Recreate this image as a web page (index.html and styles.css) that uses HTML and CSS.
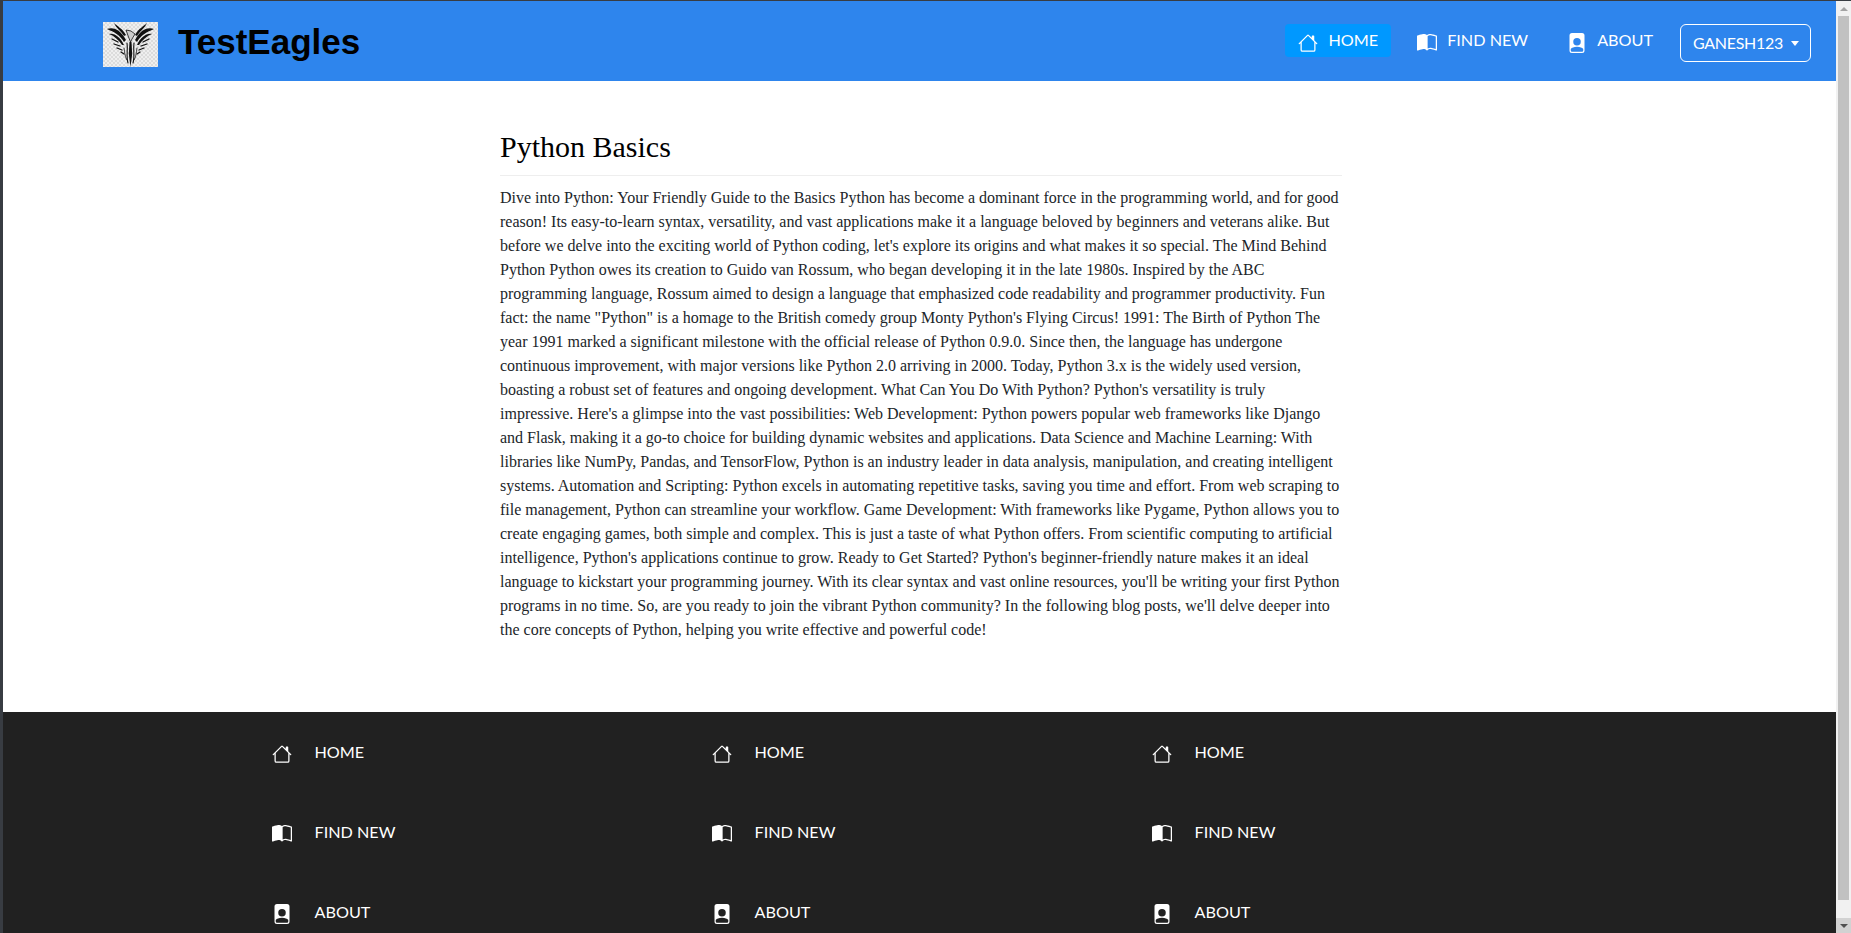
FILE: index.html
```html
<!DOCTYPE html>
<html lang="en">
<head>
<meta charset="utf-8">
<title>Python Basics</title>
<link rel="stylesheet" href="styles.css">
</head>
<body>
<svg class="sprites" width="0" height="0" aria-hidden="true">
  <symbol id="i-home" viewBox="0 0 16 16">
    <path fill="currentColor" d="M8.707 1.5a1 1 0 0 0-1.414 0L.646 8.146a.5.5 0 0 0 .708.708L2 8.207V13.5A1.5 1.5 0 0 0 3.5 15h9a1.5 1.5 0 0 0 1.5-1.5V8.207l.646.647a.5.5 0 0 0 .708-.708L13 5.793V2.5a.5.5 0 0 0-.5-.5h-1a.5.5 0 0 0-.5.5v1.293L8.707 1.5ZM13 7.207V13.5a.5.5 0 0 1-.5.5h-9a.5.5 0 0 1-.5-.5V7.207l5-5 5 5Z"/>
  </symbol>
  <symbol id="i-book" viewBox="0 0 16 16">
    <path fill="currentColor" d="M8.5 2.687c.654-.689 1.782-.886 3.112-.752 1.234.124 2.503.523 3.388.893v9.923c-.918-.35-2.107-.692-3.287-.81-1.094-.111-2.278-.039-3.213.492V2.687ZM8 1.783C7.015.936 5.587.81 4.287.94c-1.514.153-3.042.672-3.994 1.105A.5.5 0 0 0 0 2.5v11a.5.5 0 0 0 .707.455c.882-.4 2.303-.881 3.68-1.02 1.409-.142 2.59.087 3.223.877a.5.5 0 0 0 .78 0c.633-.79 1.814-1.019 3.222-.877 1.378.139 2.8.62 3.681 1.02A.5.5 0 0 0 16 13.5v-11a.5.5 0 0 0-.293-.455c-.952-.433-2.48-.952-3.994-1.105C10.413.809 8.985.936 8 1.783Z"/>
  </symbol>
  <symbol id="i-person" viewBox="0 0 16 16">
    <path fill="currentColor" d="M12 0H4a2 2 0 0 0-2 2v12a2 2 0 0 0 2 2h8a2 2 0 0 0 2-2V2a2 2 0 0 0-2-2zm-1 7a3 3 0 1 1-6 0 3 3 0 0 1 6 0zm-3 4c2.623 0 4.146.826 5 1.755V14a1 1 0 0 1-1 1H4a1 1 0 0 1-1-1v-1.245C3.854 11.825 5.377 11 8 11z"/>
  </symbol>
  <g id="wing">
    <path fill="#111" d="M4 7C10 5 17 7 23 18L21 20C17 13 11 10 4 7Z"/>
    <path fill="#111" d="M11 1C14 4 20 7 23 13L21 14C18 9 13 6 11 1Z"/>
    <path fill="#111" d="M6 12C12 11 17 15 21 23L19 23C16 18 11 14 6 12Z"/>
    <path fill="none" stroke="#111" stroke-width="1.3" stroke-linecap="round" d="M9 17L15 20M11 22L17 24M14 26L19 28M18 30L21 32"/>
    <path fill="none" stroke="#111" stroke-width="1.1" stroke-linecap="round" d="M24 21C25 28 23 35 25 41"/>
    <path fill="none" stroke="#111" stroke-width=".8" stroke-linecap="round" d="M21 26C22 32 22 35 24 38"/>
  </g>
</svg>
<div class="frame">
  <div class="page">
    <header class="navbar">
      <a class="brand" href="#">
        <span class="logo">
          <svg viewBox="0 0 55 45" width="55" height="45" aria-hidden="true">
            <use href="#wing"/>
            <use href="#wing" transform="translate(55 0) scale(-1 1)"/>
            <path fill="#111" d="M26.5 20h2l.7 12-1.7 13-1.7-13z"/>
            <path fill="#ccc" stroke="#111" stroke-width=".8" d="M23 8l5 1 4 3-3 5-1.5 3-2-5z"/>
          </svg>
        </span>
        <span class="brand-name">TestEagles</span>
      </a>
      <nav class="nav">
        <a class="nav-link active" href="#"><svg class="icon"><use href="#i-home"/></svg>HOME</a>
        <a class="nav-link" href="#"><svg class="icon"><use href="#i-book"/></svg>FIND NEW</a>
        <a class="nav-link" href="#"><svg class="icon"><use href="#i-person"/></svg>ABOUT</a>
        <button class="user-btn" type="button">GANESH123<span class="caret"></span></button>
      </nav>
    </header>
    <main class="article">
      <h2 class="title">Python Basics</h2>
      <p class="body-text">Dive into Python: Your Friendly Guide to the Basics Python has become a dominant force in the programming world, and for good reason! Its easy-to-learn syntax, versatility, and vast applications make it a language beloved by beginners and veterans alike. But before we delve into the exciting world of Python coding, let's explore its origins and what makes it so special. The Mind Behind Python Python owes its creation to Guido van Rossum, who began developing it in the late 1980s. Inspired by the ABC programming language, Rossum aimed to design a language that emphasized code readability and programmer productivity. Fun fact: the name "Python" is a homage to the British comedy group Monty Python's Flying Circus! 1991: The Birth of Python The year 1991 marked a significant milestone with the official release of Python 0.9.0. Since then, the language has undergone continuous improvement, with major versions like Python 2.0 arriving in 2000. Today, Python 3.x is the widely used version, boasting a robust set of features and ongoing development. What Can You Do With Python? Python's versatility is truly impressive. Here's a glimpse into the vast possibilities: Web Development: Python powers popular web frameworks like Django and Flask, making it a go-to choice for building dynamic websites and applications. Data Science and Machine Learning: With libraries like NumPy, Pandas, and TensorFlow, Python is an industry leader in data analysis, manipulation, and creating intelligent systems. Automation and Scripting: Python excels in automating repetitive tasks, saving you time and effort. From web scraping to file management, Python can streamline your workflow. Game Development: With frameworks like Pygame, Python allows you to create engaging games, both simple and complex. This is just a taste of what Python offers. From scientific computing to artificial intelligence, Python's applications continue to grow. Ready to Get Started? Python's beginner-friendly nature makes it an ideal language to kickstart your programming journey. With its clear syntax and vast online resources, you'll be writing your first Python programs in no time. So, are you ready to join the vibrant Python community? In the following blog posts, we'll delve deeper into the core concepts of Python, helping you write effective and powerful code!</p>
    </main>
    <footer class="footer">
      <div class="footer-grid">
        <ul class="footer-col">
          <li><a class="footer-link" href="#"><svg class="icon"><use href="#i-home"/></svg>HOME</a></li>
          <li><a class="footer-link" href="#"><svg class="icon"><use href="#i-book"/></svg>FIND NEW</a></li>
          <li><a class="footer-link" href="#"><svg class="icon"><use href="#i-person"/></svg>ABOUT</a></li>
        </ul>
        <ul class="footer-col">
          <li><a class="footer-link" href="#"><svg class="icon"><use href="#i-home"/></svg>HOME</a></li>
          <li><a class="footer-link" href="#"><svg class="icon"><use href="#i-book"/></svg>FIND NEW</a></li>
          <li><a class="footer-link" href="#"><svg class="icon"><use href="#i-person"/></svg>ABOUT</a></li>
        </ul>
        <ul class="footer-col">
          <li><a class="footer-link" href="#"><svg class="icon"><use href="#i-home"/></svg>HOME</a></li>
          <li><a class="footer-link" href="#"><svg class="icon"><use href="#i-book"/></svg>FIND NEW</a></li>
          <li><a class="footer-link" href="#"><svg class="icon"><use href="#i-person"/></svg>ABOUT</a></li>
        </ul>
      </div>
    </footer>
  </div>
  <div class="scrollbar" aria-hidden="true">
    <span class="sb-btn"><span class="sb-up"></span></span>
    <span class="sb-track"><span class="sb-thumb"></span></span>
    <span class="sb-btn sb-btn-end"><span class="sb-down"></span></span>
  </div>
</div>
</body>
</html>
```
FILE: styles.css
```css
* { box-sizing: border-box; }
html, body { margin: 0; height: 100%; overflow: hidden; }
body { background: #383c42; padding: 1px 0 0 3px; }
.sprites { position: absolute; }
a { text-decoration: none; color: inherit; }

.frame { display: flex; height: 932px; }
.page { flex: 1; min-width: 0; background: #fff; overflow: hidden; }

.navbar {
  display: flex; align-items: center; justify-content: space-between;
  height: 80px; background: #2e85ed; padding: 0 25px 0 100px;
}
.brand { display: flex; align-items: center; gap: 20px; }
.logo {
  display: block; width: 55px; height: 45px; margin-top: 7px;
  background: repeating-conic-gradient(#dcdcdc 0 25%, #efefef 0 50%) 0 0 / 4px 4px;
}
.logo svg { display: block; }
.brand-name {
  font: 700 35px/1 "Liberation Sans", Arial, sans-serif; color: #000;
}

.nav { display: flex; align-items: center; margin-bottom: 1px; }
.nav-link {
  display: flex; align-items: center; gap: 10px;
  height: 33px; padding: 0 13px; margin-right: 13px; border-radius: 4px;
  font: 400 16.2px/1 Lato, sans-serif; color: #fff;
}
.nav-link.active { background: #0098ff; }
.icon { width: 20px; height: 20px; flex: none; margin-top: 4px; color: #fff; }
.user-btn {
  display: flex; align-items: center;
  width: 131px; height: 38px; padding: 0 12px; margin: 5px 0 0 1px;
  background: transparent; border: 1px solid #fff; border-radius: 6px;
  font: 400 16px/1 Lato, sans-serif; letter-spacing: -.3px; color: #fff;
}
.caret {
  margin-left: 8px; width: 0; height: 0;
  border-top: 5px solid #fff; border-left: 4px solid transparent; border-right: 4px solid transparent;
}

.article { width: 866px; margin: 0 0 0 485px; padding: 47px 12px 0; height: 631px; }
.title {
  margin: 0 0 10px; padding-bottom: 9px; border-bottom: 1px solid #eee;
  font: 400 30px/38px "Liberation Serif", "Times New Roman", serif; color: #000;
}
.body-text {
  margin: 0; font: 400 16px/24px "Liberation Serif", "Times New Roman", serif; color: #212529;
}

.footer { background: #212121; padding-top: 20px; color: #fff; }
.footer-grid { display: grid; grid-template-columns: repeat(3, 440px); justify-content: center; }
.footer-col { list-style: none; margin: 0; padding: 0 12px; }
.footer-col li { height: 80px; }
.footer-link {
  display: flex; align-items: center; gap: 23px; height: 40px;
  font: 400 16.2px/1 Lato, sans-serif;
}

.scrollbar { width: 15px; display: flex; flex-direction: column; background: #f1f1f1; }
.sb-btn { flex: none; height: 15px; display: flex; align-items: center; justify-content: center; }
.sb-btn-end { background: #d2d2d2; }
.sb-up { width: 0; height: 0; border-bottom: 4px solid #a3a3a3; border-left: 4px solid transparent; border-right: 4px solid transparent; }
.sb-down { width: 0; height: 0; border-top: 4px solid #505050; border-left: 4px solid transparent; border-right: 4px solid transparent; }
.sb-track { flex: 1; padding: 0 2px; }
.sb-thumb { display: block; height: 884px; background: #c1c1c1; }
```
